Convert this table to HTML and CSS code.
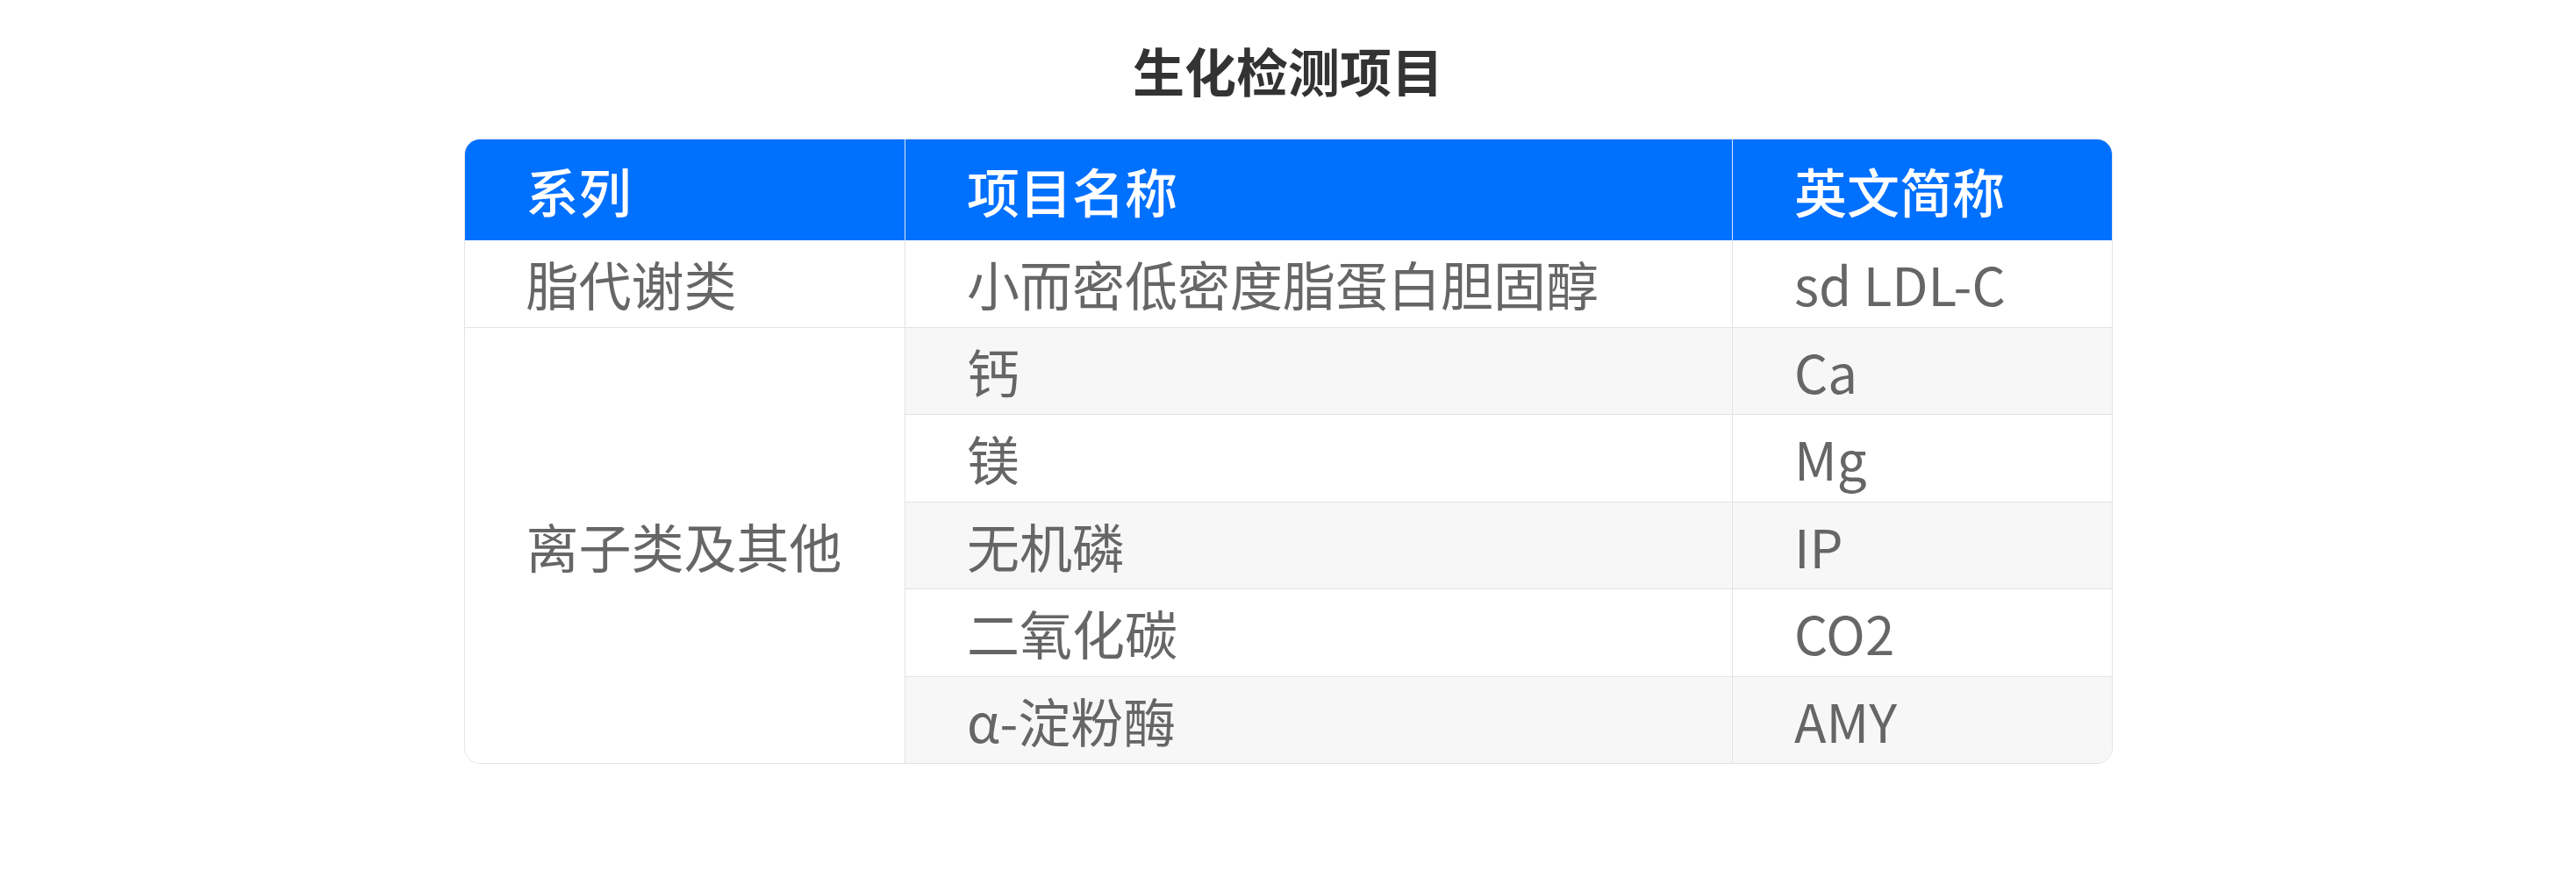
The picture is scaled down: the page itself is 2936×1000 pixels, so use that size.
FILE: index.html
```html
<!DOCTYPE html>
<html lang="zh-CN">
<head>
    <meta charset="UTF-8">
    <meta name="viewport" content="width=device-width, initial-scale=1.0">
    <title>生化检测项目</title>
    <link rel="stylesheet" href="styles.css">
</head>
<body>
    <div class="container">
        <h1>生化检测项目</h1>

        <div class="table-wrap">
            <table class="test-table">
                <colgroup>
                    <col class="col-series">
                    <col class="col-name">
                    <col class="col-abbr">
                </colgroup>
                <thead>
                    <tr>
                        <th>系列</th>
                        <th>项目名称</th>
                        <th>英文简称</th>
                    </tr>
                </thead>
                <tbody>
                    <tr>
                        <td class="series">脂代谢类</td>
                        <td>小而密低密度脂蛋白胆固醇</td>
                        <td>sd LDL-C</td>
                    </tr>
                    <tr class="stripe">
                        <td class="series" rowspan="5">离子类及其他</td>
                        <td>钙</td>
                        <td>Ca</td>
                    </tr>
                    <tr>
                        <td>镁</td>
                        <td>Mg</td>
                    </tr>
                    <tr class="stripe">
                        <td>无机磷</td>
                        <td>IP</td>
                    </tr>
                    <tr>
                        <td>二氧化碳</td>
                        <td>CO2</td>
                    </tr>
                    <tr class="stripe">
                        <td>α-淀粉酶</td>
                        <td>AMY</td>
                    </tr>
                </tbody>
            </table>
        </div>
    </div>
</body>
</html>
```

FILE: styles.css
```css
body {
    font-family: "Noto Sans CJK SC", "Noto Sans", sans-serif;
    margin: 0;
    background: #fff;
}
.container {
    width: 1879px;
    margin: 0 auto;
    padding-top: 40px;
}
h1 {
    margin: 0 0 38px;
    font-size: 59px;
    line-height: 80px;
    font-weight: 700;
    color: #333;
    text-align: center;
}
.table-wrap {
    border: 1px solid #e3e3e3;
    border-radius: 18px;
    overflow: hidden;
}
.test-table {
    width: 100%;
    border-collapse: collapse;
    table-layout: fixed;
}
.col-series {
    width: 502px;
}
.col-name {
    width: 943px;
}
th, td {
    text-align: left;
    padding: 0 0 0 70px;
    font-size: 60px;
    vertical-align: middle;
}
th {
    height: 115px;
    background: #0070ff;
    color: #fff;
    font-weight: 500;
    border-left: 1px solid #d6e6ff;
}
th:first-child {
    border-left: none;
}
td {
    height: 98.5px;
    color: #666;
    border-top: 1px solid #e3e3e3;
    border-left: 1px solid #e3e3e3;
    line-height: 1.2;
}
td.series {
    border-left: none;
    background: #fff;
}
tbody tr:first-child td {
    border-top: none;
}
.stripe td {
    background: #f7f7f7;
}
.stripe td.series {
    background: #fff;
}
```
